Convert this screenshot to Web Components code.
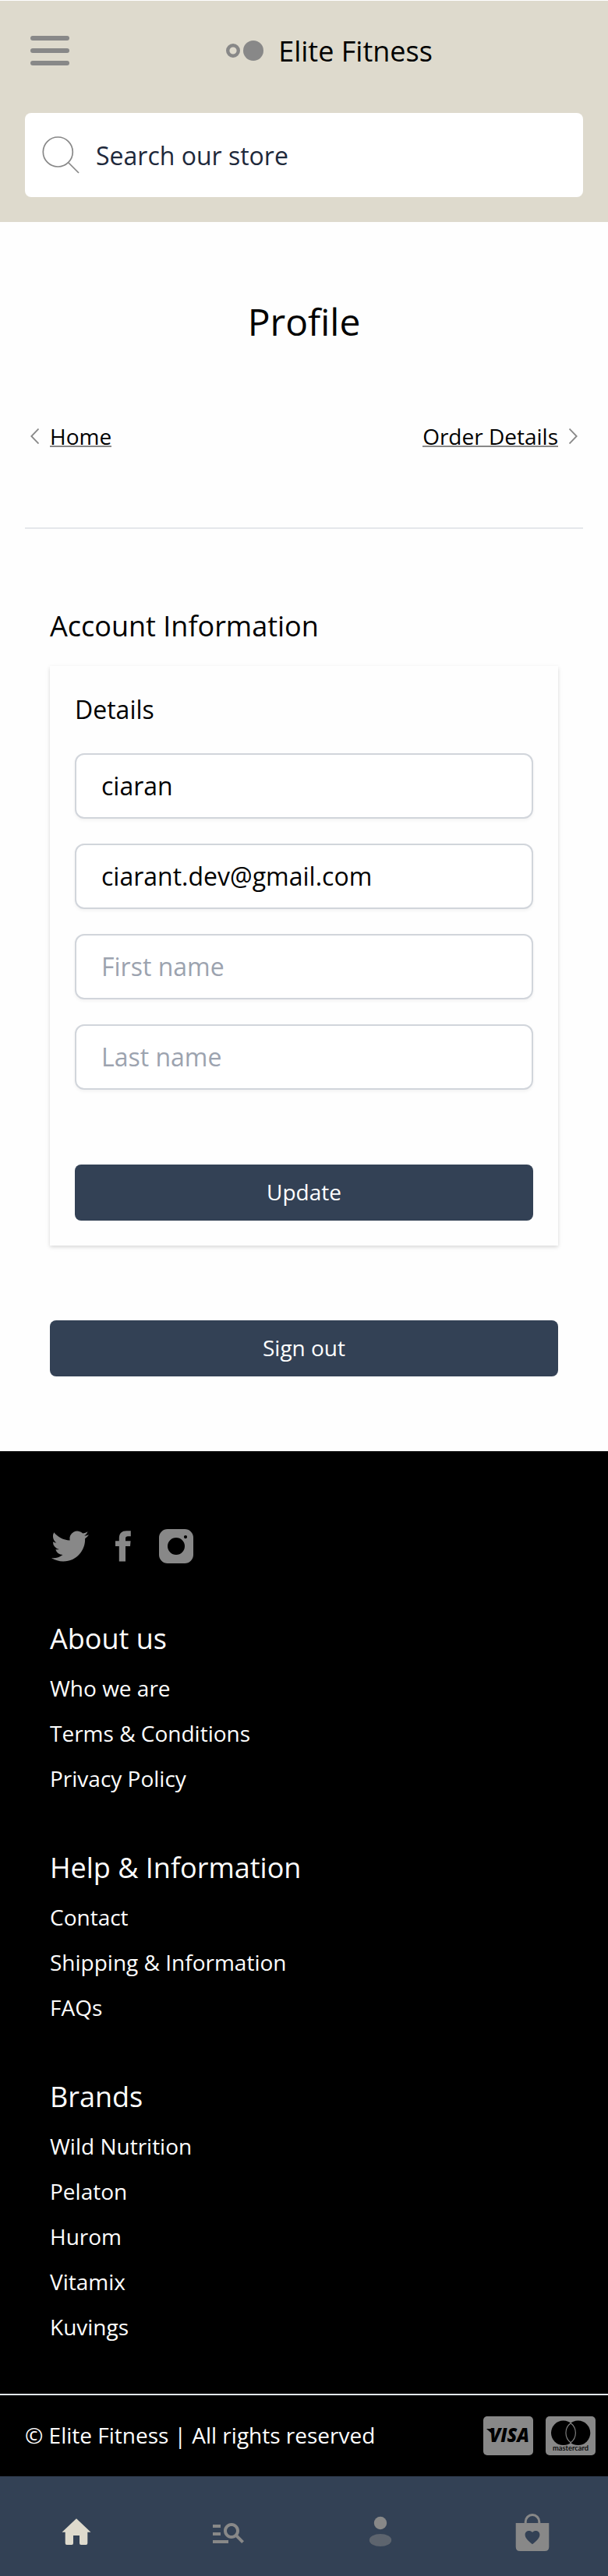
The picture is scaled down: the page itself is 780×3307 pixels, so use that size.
<!DOCTYPE html>
<html lang="en">
<head>
<meta charset="utf-8">
<title>Elite Fitness</title>
<style>
body{margin:0;background:#fefefe;color:#000;font-family:"Open Sans","Noto Sans",sans-serif;font-size:28px}
</style>
</head>
<body>
<store-header></store-header>
<profile-page>
  <account-card>
    <text-field value="ciaran"></text-field>
    <text-field value="ciarant.dev@gmail.com"></text-field>
    <text-field placeholder="First name"></text-field>
    <text-field placeholder="Last name"></text-field>
  </account-card>
</profile-page>
<store-footer>
  <link-group heading="About us" links="Who we are|Terms &amp; Conditions|Privacy Policy"></link-group>
  <link-group heading="Help &amp; Information" links="Contact|Shipping &amp; Information|FAQs"></link-group>
  <link-group heading="Brands" links="Wild Nutrition|Pelaton|Hurom|Vitamix|Kuvings"></link-group>
</store-footer>
<tab-bar></tab-bar>
<script>
const define = (name, render) => customElements.define(name, class extends HTMLElement {
  connectedCallback() {
    if (this.shadowRoot) return;
    this.attachShadow({mode: "open"}).innerHTML = "<style>*{box-sizing:border-box}svg{display:block;flex:none}</style>" + render(this);
  }
});
const esc = s => (s || "").replace(/&/g, "&amp;").replace(/</g, "&lt;");

define("store-header", () => `
<style>
:host{display:block;box-sizing:border-box;margin-top:1px;height:284px;background:#dedacd;padding:0 32px}
.bar{height:128px;display:grid;grid-template-columns:68px 1fr 68px;align-items:center}
.bar>svg{margin-left:7px}
.brand{display:flex;align-items:center;justify-content:center;gap:19px;font-size:36px;line-height:56px;padding-left:65px}
.brand span{padding-top:2px}
.search{margin-top:16px;height:108px;background:#fff;border-radius:8px;display:flex;align-items:center;gap:21px;padding-left:22px;font-size:32px;color:#1e293b}
</style>
<div class="bar">
  <svg width="50" height="38" fill="#888"><rect width="50" height="6" rx="3"/><rect y="16" width="50" height="6" rx="3"/><rect y="32" width="50" height="6" rx="3"/></svg>
  <div class="brand"><svg width="48" height="26"><circle cx="9" cy="13" r="6.8" fill="none" stroke="#888" stroke-width="4.4"/><circle cx="35" cy="13" r="13" fill="#888"/></svg><span>Elite Fitness</span></div>
</div>
<div class="search"><svg width="48" height="48" fill="none" stroke="#888" stroke-width="1.7"><circle cx="20.3" cy="20" r="19"/><path d="M34 34L47 47"/></svg><span>Search our store</span></div>`);

define("nav-link", el => `
<style>
:host{display:flex;align-items:center;gap:14px;height:40px}
:host([forward]){flex-direction:row-reverse}
:host([forward]) svg{transform:scaleX(-1)}
span{line-height:40px;position:relative}
span::after{content:"";position:absolute;left:0;right:0;bottom:6px;height:2px;background:#888}
</style>
<svg width="11" height="20" fill="none" stroke="#888" stroke-width="1.8"><path d="M10.5 .5L1.3 10L10.5 19.5"/></svg><span><slot></slot></span>`);

define("solid-button", () => `
<style>:host{display:flex;align-items:center;justify-content:center;box-sizing:border-box;height:72px;padding-bottom:2px;border-radius:8px;background:#334155;color:#fff}</style><slot></slot>`);

define("text-field", el => `
<style>
:host{display:flex;align-items:center;box-sizing:border-box;height:84px;border:2px solid #d1d5db;border-radius:12px;padding:0 32px 2px;background:#fff;box-shadow:0 2px 4px rgba(0,0,0,.05);font-size:32px}
.hint{color:#9ca3af}
</style>
<span class="${el.hasAttribute("value") ? "" : "hint"}">${esc(el.getAttribute("value") || el.getAttribute("placeholder"))}</span>`);

define("account-card", () => `
<style>
:host{display:block;padding:32px;box-shadow:0 2px 6px rgba(0,0,0,.1),0 2px 4px rgba(0,0,0,.06);background:#fefefe}
h3{margin:0 0 32px;font:inherit;font-size:32px;line-height:48px}
.fields{display:grid;gap:32px;margin-bottom:96px}
</style>
<h3>Details</h3><div class="fields"><slot></slot></div><solid-button>Update</solid-button>`);

define("profile-page", () => `
<style>
:host{display:block;padding:92px 32px 96px}
h1,h2{font:inherit;margin:0}
h1{font-size:48px;line-height:72px;text-align:center}
nav{display:flex;justify-content:space-between;margin-top:91px;padding:0 7px}
hr{border:0;height:2px;background:#e5e7eb;margin:97px 0}
h2{font-size:36px;line-height:56px;margin-bottom:23px}
section{padding:0 32px}
.out{margin-top:96px}
</style>
<h1>Profile</h1>
<nav><nav-link>Home</nav-link><nav-link forward>Order Details</nav-link></nav>
<hr>
<section><h2>Account Information</h2><slot></slot><solid-button class="out">Sign out</solid-button></section>`);

define("link-group", el => `
<style>
:host{display:block}
h4{margin:0 0 6px;font:inherit;font-size:36px;line-height:56px}
div{line-height:58px}
</style>
<h4>${esc(el.getAttribute("heading"))}</h4>${el.getAttribute("links").split("|").map(t => `<div>${esc(t)}</div>`).join("")}`);

define("store-footer", () => `
<style>
:host{display:block;background:#000;color:#fff}
.social{display:flex;padding:98px 66px 0;height:146px;align-items:center}
.fb{margin-left:34px}.ig{margin-left:36px}
.groups{display:grid;gap:58px;padding:67px 64px 57px}
.legal{display:flex;align-items:center;height:106px;border-top:2px solid #e2e8f0;padding:0 16px 0 32px}
.legal span{margin-right:auto;padding-bottom:2px}
.mc{margin-left:16px}
</style>
<div class="social">
<svg width="48" height="48" viewBox="0 0 24 24" fill="#888"><path d="M23.953 4.57a10 10 0 01-2.825.775 4.958 4.958 0 002.163-2.723c-.951.555-2.005.959-3.127 1.184a4.92 4.92 0 00-8.384 4.482C7.69 8.095 4.067 6.13 1.64 3.162a4.822 4.822 0 00-.666 2.475c0 1.71.87 3.213 2.188 4.096a4.904 4.904 0 01-2.228-.616v.06a4.923 4.923 0 003.946 4.827 4.996 4.996 0 01-2.212.085 4.936 4.936 0 004.604 3.417 9.867 9.867 0 01-6.102 2.105c-.39 0-.779-.023-1.17-.067a13.995 13.995 0 007.557 2.209c9.053 0 13.998-7.496 13.998-13.985 0-.21 0-.42-.015-.63A9.935 9.935 0 0024 4.59z"/></svg>
<svg class="fb" width="20" height="48" fill="#888"><path d="M19.8 4.2H14.5C8 4.2 4.8 7.5 4.8 14V17.3H0V24H4.8V43.5H13V24H19L19.6 17.3H13V14.2C13 12 14 11.2 16 11.2H19.8Z"/></svg>
<svg class="ig" width="44" height="44"><path fill="#888" fill-rule="evenodd" d="M11 0H33A11 11 0 0 1 44 11V33A11 11 0 0 1 33 44H11A11 11 0 0 1 0 33V11A11 11 0 0 1 11 0ZM22 11A11 11 0 1 0 22 33A11 11 0 1 0 22 11ZM34 8A2.1 2.1 0 1 0 34 12.2A2.1 2.1 0 1 0 34 8Z"/></svg>
</div>
<div class="groups"><slot></slot></div>
<div class="legal"><span>© Elite Fitness | All rights reserved</span>
<svg width="64" height="50"><rect width="64" height="50" rx="5" fill="#888"/><path d="M4 16H10L12 23Z"/><text x="8" y="33.3" font-family="Open Sans" font-size="24" font-weight="800" font-style="italic" textLength="51" lengthAdjust="spacingAndGlyphs">VISA</text></svg>
<svg class="mc" width="64" height="50"><rect width="64" height="50" rx="5" fill="#888"/><circle cx="22.7" cy="21.3" r="15.7"/><circle cx="41.6" cy="21.3" r="15.7"/><path d="M32.15 8.8A15.7 15.7 0 0 1 32.15 33.8A15.7 15.7 0 0 1 32.15 8.8Z" stroke="#888" stroke-width="1.1"/><text x="9" y="44" font-family="Lato" font-weight="600" font-size="9.6" textLength="46" lengthAdjust="spacingAndGlyphs">mastercard</text></svg>
</div>`);

define("tab-bar", () => `
<style>
:host{display:grid;grid-template-columns:repeat(4,1fr);justify-items:center;box-sizing:border-box;height:128px;padding-top:48px;background:#334155}
</style>
<svg width="48" height="48" fill="#dedacd"><path d="M24 6.3L42.5 23.8H38.3V38Q38.3 40 36.3 40H30Q28 40 28 38V28H20V38Q20 40 18 40H11.7Q9.7 40 9.7 38V23.8H5.5Z"/></svg>
<svg width="48" height="48" viewBox="0 0 24 24" fill="#888"><path d="M7 9H2V7h5v2zm0 3H2v2h5v-2zm13.59 7l-3.83-3.83c-.8.52-1.74.83-2.76.83-2.76 0-5-2.24-5-5s2.24-5 5-5 5 2.24 5 5c0 1.02-.31 1.96-.83 2.75L22 17.59 20.59 19zM17 11c0-1.65-1.35-3-3-3s-3 1.35-3 3 1.35 3 3 3 3-1.35 3-3zM2 19h10v-2H2v2z"/></svg>
<svg width="48" height="48" fill="#888"><circle cx="24" cy="12" r="8.2"/><ellipse cx="24" cy="34" rx="14.2" ry="8.1" opacity=".5"/></svg>
<svg width="48" height="48" fill="#888"><path fill-rule="evenodd" d="M2.7 12H45.3V42.5Q45.3 48 39.8 48H8.2Q2.7 48 2.7 42.5ZM24 39.3C19 35 14.6 31.5 14.6 27C14.6 22 20.8 20.5 24 24C27.2 20.5 33.4 22 33.4 27C33.4 31.5 29 35 24 39.3Z"/><path d="M15.2 12.5V10.5A8.8 9 0 0 1 32.8 10.5V12.5" fill="none" stroke="#888" stroke-width="3"/></svg>`);
</script>
</body>
</html>
